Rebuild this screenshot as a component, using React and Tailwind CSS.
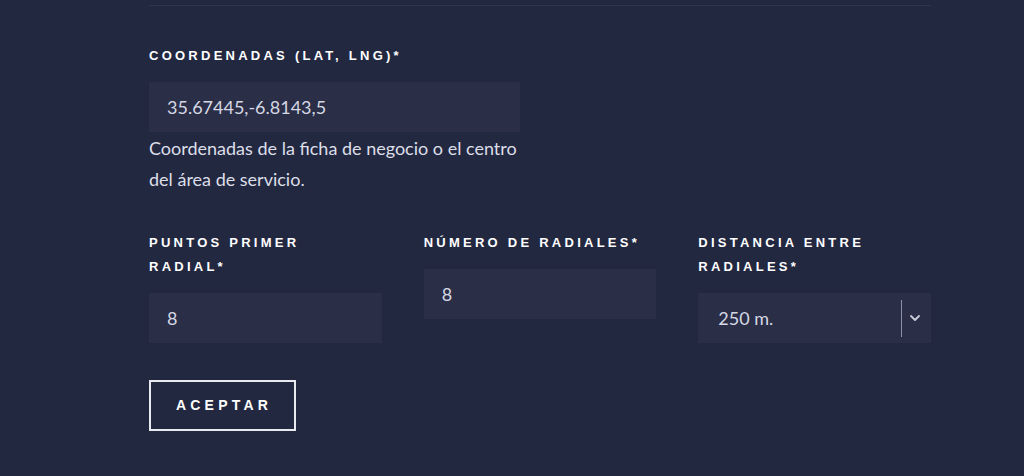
import { ChevronDown } from 'lucide-react';

const labelCls =
  "block pr-4 pt-px font-['Liberation_Sans',Arial,sans-serif] font-bold text-[13px] leading-[24px] tracking-[0.25em] uppercase text-white mb-[14px]";
const inputCls =
  "w-full h-[50px] bg-[#2a2e47] px-[18px] text-[18px] text-[#d5d8e4] font-['Lato',sans-serif] outline-none";

function Field({ label, value, children }) {
  return (
    <div>
      <label className={labelCls}>{label}</label>
      {children || <input className={inputCls} defaultValue={value} />}
    </div>
  );
}

export default function App() {
  return (
    <div className="min-h-[476px] bg-[#232841] font-['Lato',sans-serif]">
      <div className="ml-[149px] w-[782px] pt-[5px] pb-10">
        <div className="h-px bg-[#30354e]" />

        {/* Coordinates */}
        <div className="mt-[37px] w-[371px]">
          <label className={labelCls}>Coordenadas (lat, lng)*</label>
          <input className={`${inputCls} h-[49px]`} defaultValue="35.67445,-6.8143,5" />
          <p className="mt-[1px] text-[18px] leading-[31px] text-[#dcdfe8]">
            Coordenadas de la ficha de negocio o el centro del área de servicio.
          </p>
        </div>

        {/* Radials */}
        <div className="mt-[35px] grid grid-cols-3 gap-x-[42px] items-start">
          <Field label="Puntos primer radial*" value="8" />
          <Field label="Número de radiales*" value="8" />
          <Field label="Distancia entre radiales*">
            <div className="relative h-[50px] bg-[#2a2e47] flex items-center">
              <select className="appearance-none w-full h-full bg-transparent pl-[20px] pr-12 text-[18px] text-[#d5d8e4] outline-none">
                <option>250 m.</option>
                <option>500 m.</option>
                <option>1000 m.</option>
              </select>
              <span className="pointer-events-none absolute right-[29px] top-[7px] h-[37px] w-px bg-[#8e92a6]" />
              <ChevronDown className="pointer-events-none absolute right-[8px] top-[17px] w-4 h-4 text-[#c9ccd8]" strokeWidth={2.75} />
            </div>
          </Field>
        </div>

        <button className="mt-[37px] w-[147px] h-[51px] border-2 border-[#e9eaf0] font-['Liberation_Sans',Arial,sans-serif] font-bold text-[14px] tracking-[0.3em] text-white uppercase pl-[3px]">
          Aceptar
        </button>
      </div>
    </div>
  );
}
